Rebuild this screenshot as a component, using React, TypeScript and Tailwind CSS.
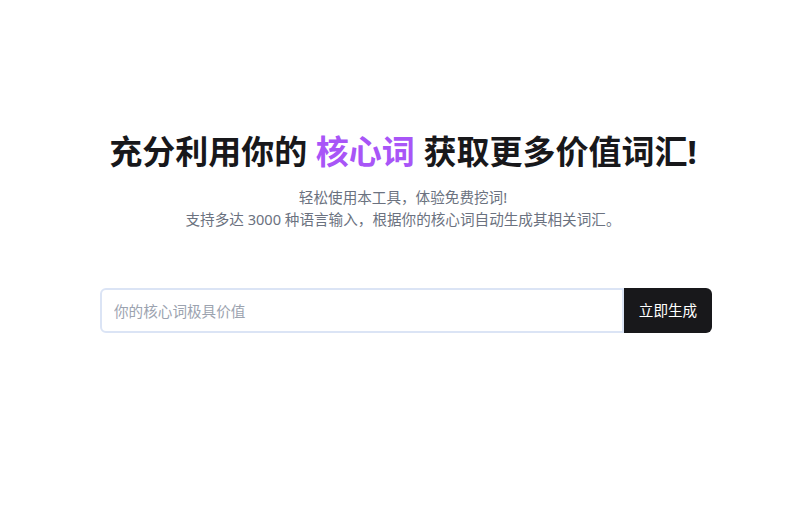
export default function App() {
  return (
    <div
      className="min-h-screen bg-white text-[#18181b]"
      style={{ fontFamily: '"Noto Sans", "Noto Sans CJK SC", sans-serif' }}
    >
      <div className="flex flex-col items-center pt-[128px] pl-[6px]">
        <h1 className="text-[33px] font-bold leading-[48px]">
          充分利用你的 <span className="text-[#a855f7]">核心词</span> 获取更多价值词汇!
        </h1>
        <p className="mt-[10px] text-center text-[14.6px] leading-[22px] text-[#6b7280]">
          轻松使用本工具，体验免费挖词!
          <br />
          支持多达 3000 种语言输入，根据你的核心词自动生成其相关词汇。
        </p>
      </div>

      <div className="mt-[58px] ml-[100px] flex w-[612px] h-[45px]">
        <input
          className="h-[45px] flex-1 rounded-l-md border-2 border-[#dbe4f5] px-[12px] text-[14.6px] text-[#374151] outline-none placeholder:text-[#9ca3af]"
          placeholder="你的核心词极具价值"
        />
        <button className="h-[45px] w-[88px] rounded-r-md bg-[#18181b] text-[14.6px] text-white">
          立即生成
        </button>
      </div>
    </div>
  );
}
